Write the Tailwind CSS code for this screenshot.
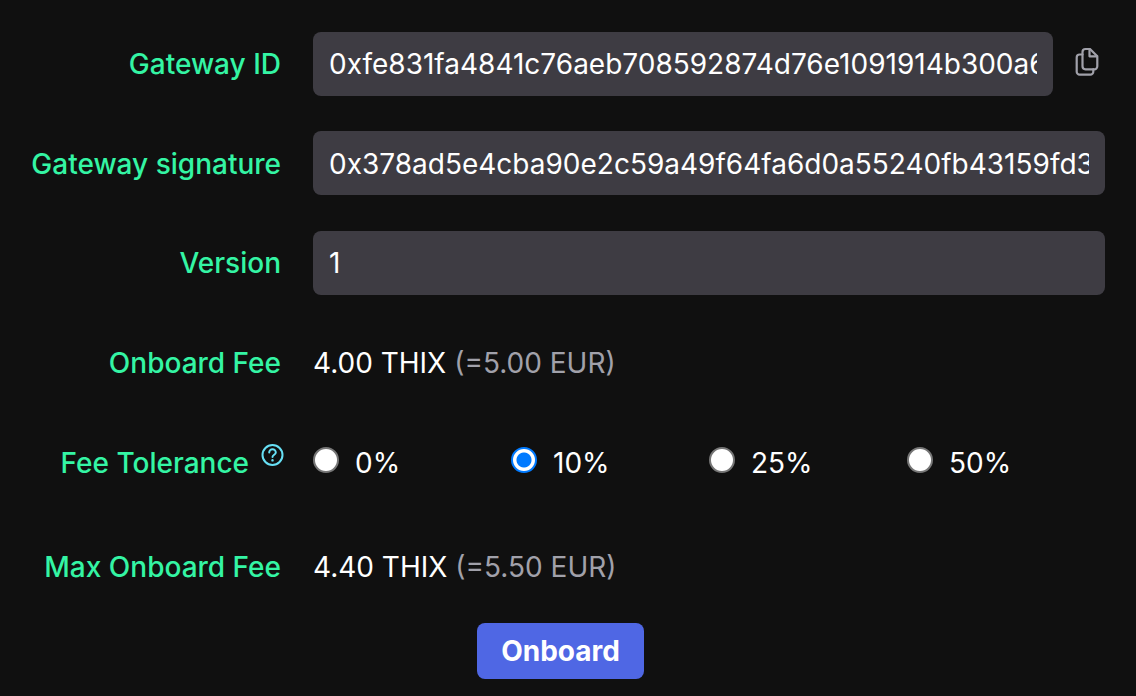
<!DOCTYPE html>
<html lang="en">
<head>
<meta charset="utf-8">
<meta name="viewport" content="width=device-width, initial-scale=1">
<title>Onboard gateway</title>
<script src="https://cdn.jsdelivr.net/npm/@tailwindcss/browser@4"></script>
</head>
<body class="min-h-screen bg-[#101010] font-['Inter',sans-serif] text-[28px] leading-10 text-white">
<form class="pt-8 pr-[31px]">
  <div class="grid grid-cols-[281px_1fr] items-center gap-x-8">
    <label for="gid" class="text-right font-medium text-[#34f5a4]">Gateway ID</label>
    <div class="flex items-center">
      <input id="gid" type="text" class="h-16 min-w-0 flex-1 rounded-lg bg-[#3e3c43] px-4" value="0xfe831fa4841c76aeb708592874d76e1091914b300a6d">
      <button type="button" aria-label="Copy gateway ID" class="mr-1 mb-1 ml-5 h-8 w-7 text-[#a1a1aa]">
        <svg class="h-8 w-7" viewBox="0 0 28 32" fill="none" stroke="currentColor" stroke-width="2.200" stroke-linecap="round" stroke-linejoin="round"><path d="M12.500 3H17l7.300 7.300v10a3 3 0 0 1-3 3h-8.800a3 3 0 0 1-3-3V6a3 3 0 0 1 3-3z"/><path d="M16.500 3v7.300h7.500"/><path d="M9.500 8.500H6.700a3 3 0 0 0-3 3v14.200a3 3 0 0 0 3 3h10.600a3 3 0 0 0 3-3v-2.400"/></svg>
      </button>
    </div>
  </div>
  <div class="mt-[35px] grid grid-cols-[281px_1fr] items-center gap-x-8">
    <label for="sig" class="pt-0.5 text-right font-medium text-[#34f5a4]">Gateway signature</label>
    <input id="sig" type="text" class="h-16 min-w-0 rounded-lg bg-[#3e3c43] px-4 pt-0.5" value="0x378ad5e4cba90e2c59a49f64fa6d0a55240fb43159fd32a1">
  </div>
  <div class="mt-9 grid grid-cols-[281px_1fr] items-center gap-x-8">
    <label for="ver" class="text-right font-medium text-[#34f5a4]">Version</label>
    <input id="ver" type="text" class="h-16 min-w-0 rounded-lg bg-[#3e3c43] px-4" value="1">
  </div>
  <div class="mt-12 grid grid-cols-[281px_1fr] items-center gap-x-8">
    <div class="text-right font-medium text-[#34f5a4]">Onboard Fee</div>
    <div class="flex gap-2"><span>4.00 THIX</span><span class="text-[#a1a1aa]">(=5.00 EUR)</span></div>
  </div>
  <fieldset class="mt-[60px] grid grid-cols-[281px_1fr] items-center gap-x-8" aria-labelledby="tol">
    <div class="-mr-1 flex justify-end gap-3 font-medium text-[#34f5a4]">
      <span id="tol">Fee Tolerance</span>
      <button type="button" aria-label="About fee tolerance" class="h-6 w-6 text-[#67e0f5]">
        <svg class="h-6 w-6" viewBox="0 0 24 24" fill="none" stroke="currentColor" stroke-width="2" stroke-linecap="round" stroke-linejoin="round"><circle cx="11.500" cy="12" r="10"/><path d="M8.200 9.500a3.300 3.300 0 0 1 6.600 0c0 2.200-3.300 2.300-3.300 4.500"/><path d="M11.500 17.300v.1" stroke-width="2.400"/></svg>
      </button>
    </div>
    <div class="grid grid-cols-4">
      <label class="flex gap-4"><input type="radio" name="tolerance" class="mt-1 h-[26px] w-[26px] appearance-none rounded-full border-2 border-[#767676] bg-white checked:border-[#007aff] checked:bg-[radial-gradient(circle,#007aff_7px,#ffffff_8px)]"><span>0%</span></label>
      <label class="flex gap-4"><input type="radio" name="tolerance" checked class="mt-1 h-[26px] w-[26px] appearance-none rounded-full border-2 border-[#767676] bg-white checked:border-[#007aff] checked:bg-[radial-gradient(circle,#007aff_7px,#ffffff_8px)]"><span>10%</span></label>
      <label class="flex gap-4"><input type="radio" name="tolerance" class="mt-1 h-[26px] w-[26px] appearance-none rounded-full border-2 border-[#767676] bg-white checked:border-[#007aff] checked:bg-[radial-gradient(circle,#007aff_7px,#ffffff_8px)]"><span>25%</span></label>
      <label class="flex gap-4"><input type="radio" name="tolerance" class="mt-1 h-[26px] w-[26px] appearance-none rounded-full border-2 border-[#767676] bg-white checked:border-[#007aff] checked:bg-[radial-gradient(circle,#007aff_7px,#ffffff_8px)]"><span>50%</span></label>
    </div>
  </fieldset>
  <div class="mt-16 grid grid-cols-[281px_1fr] items-center gap-x-8">
    <div class="text-right font-medium text-[#34f5a4]">Max Onboard Fee</div>
    <div class="flex gap-2"><span>4.40 THIX</span><span class="text-[#a1a1aa]">(=5.50 EUR)</span></div>
  </div>
  <div class="mt-9 flex justify-center pl-4">
    <button type="submit" class="h-14 rounded-lg bg-[#4f67e4] px-6 font-bold">Onboard</button>
  </div>
</form>
</body>
</html>
